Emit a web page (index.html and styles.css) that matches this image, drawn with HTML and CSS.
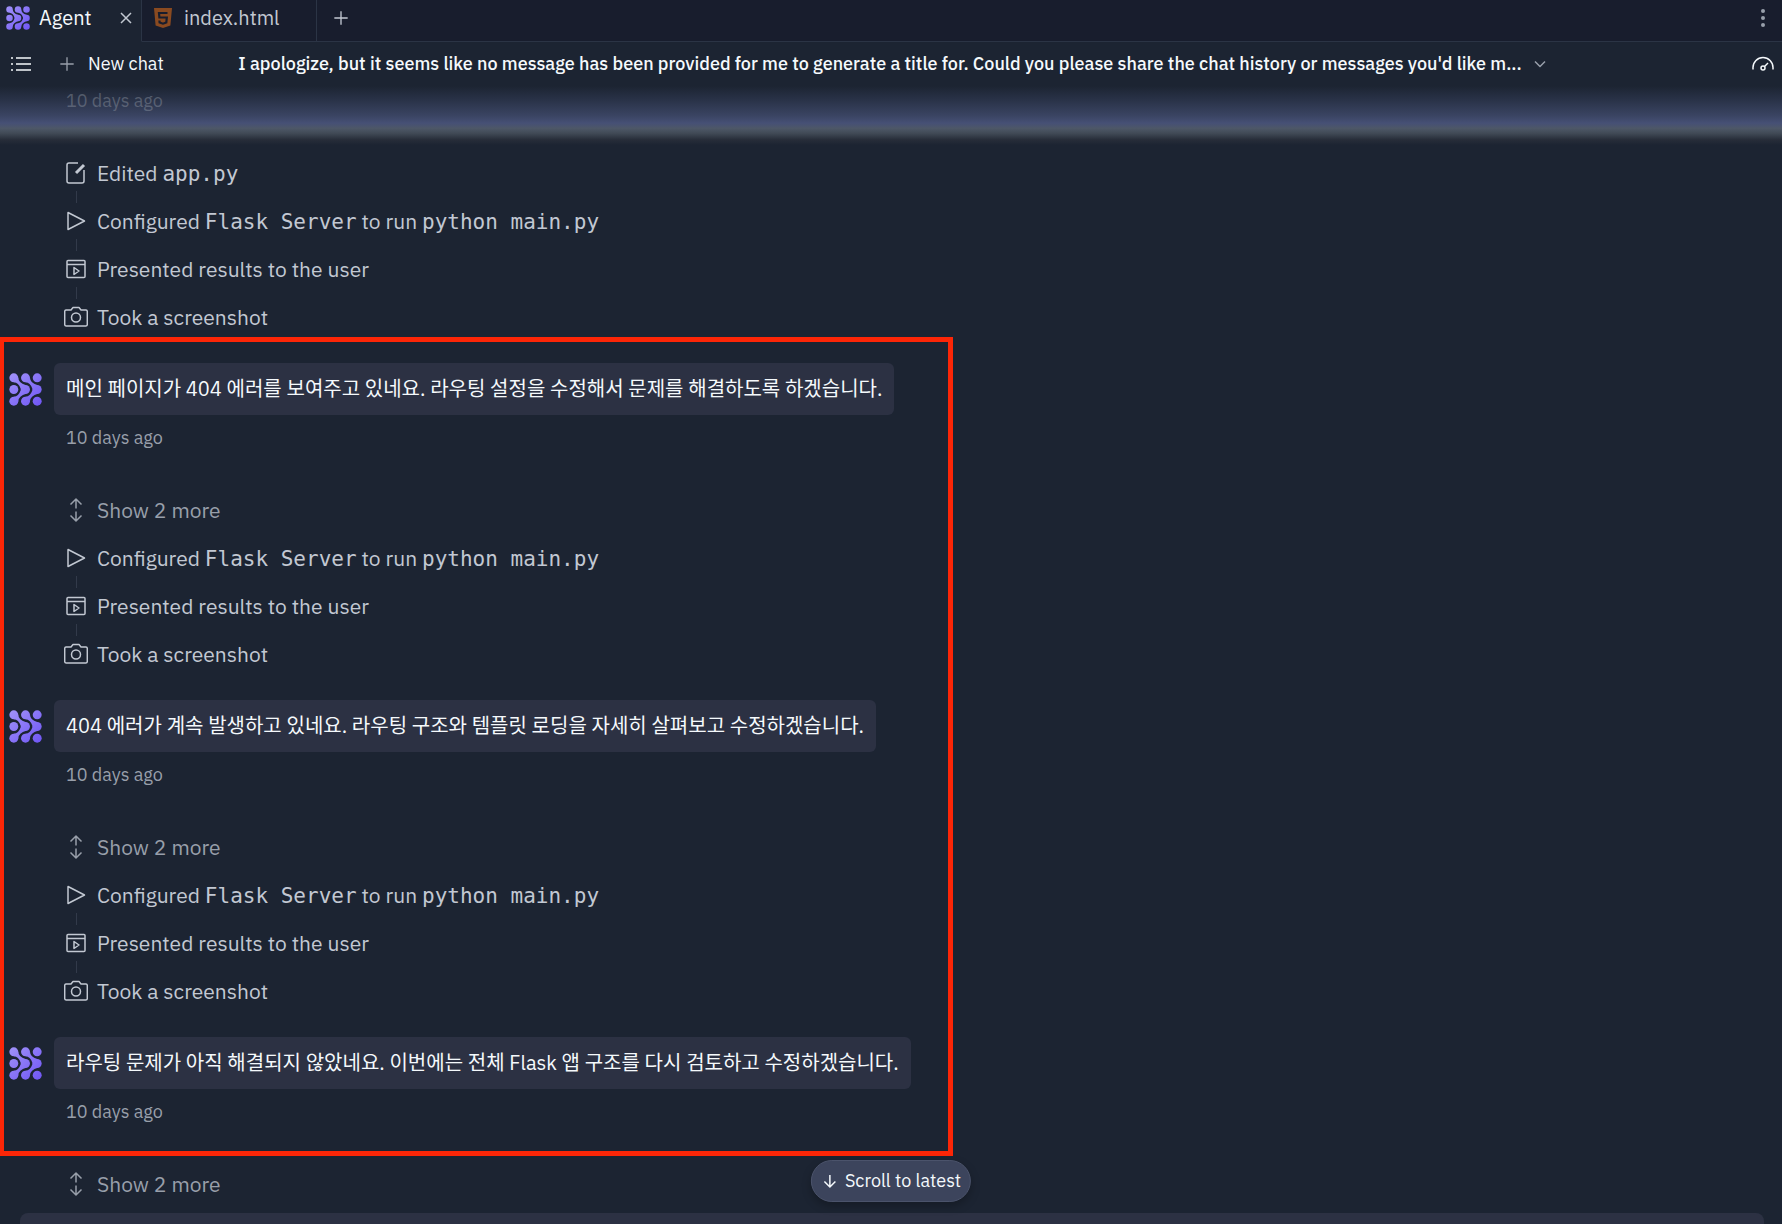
FILE: index.html
```html
<!DOCTYPE html>
<html lang="en">
<head>
    <meta charset="UTF-8">
    <meta name="viewport" content="width=device-width, initial-scale=1.0">
    <title>Agent</title>
    <link rel="stylesheet" href="styles.css">
</head>
<body>
    <!-- shared icons -->
    <svg class="sprite" aria-hidden="true">
        <defs>
            <linearGradient id="logo-fill" gradientUnits="userSpaceOnUse" x1="0" y1="0" x2="96" y2="96">
                <stop offset="0" stop-color="#a193f9"/>
                <stop offset="1" stop-color="#6f55f5"/>
            </linearGradient>
        </defs>
        <symbol id="agent" viewBox="0 0 96 96">
            <g fill="url(#logo-fill)">
                <circle cx="14" cy="14" r="13"/><circle cx="48" cy="14" r="13"/><circle cx="82" cy="14" r="13"/>
                <circle cx="14" cy="48" r="13"/><circle cx="48" cy="48" r="13"/><circle cx="82" cy="48" r="13"/>
                <circle cx="14" cy="82" r="13"/><circle cx="48" cy="82" r="13"/><circle cx="82" cy="82" r="13"/>
                <path d="M27 14Q28 30 48 35L50 60Q28 66 27 82L14 69Q28 68 34 50L34 46Q28 28 14 27Z"/>
                <path d="M61 14Q62 30 82 35L84 60Q62 66 61 82L48 69Q62 68 68 50L68 46Q62 28 48 27Z"/>
            </g>
        </symbol>
        <symbol id="edit" viewBox="0 0 24 24">
            <path d="M14 2H5a2 2 0 0 0-2 2v16a2 2 0 0 0 2 2h13a2 2 0 0 0 2-2V9"/>
            <path d="M12 12l8-8" stroke-width="3"/>
        </symbol>
        <symbol id="play" viewBox="0 0 24 24"><path d="M4 3.500v17L20.500 12z"/></symbol>
        <symbol id="present" viewBox="0 0 24 24">
            <rect x="3" y="3.500" width="18" height="17" rx="1"/>
            <path d="M3 7.500h18M10 10.500v7l5-3.500z"/>
        </symbol>
        <symbol id="camera" viewBox="0 0 24 24">
            <path d="M2 5h5l2-2.500h6L17 5h5a1.500 1.500 0 0 1 1.300 1.500v13a1.500 1.500 0 0 1-1.500 1.500H2.200a1.500 1.500 0 0 1-1.500-1.500v-13A1.500 1.500 0 0 1 2 5z"/>
            <circle cx="12" cy="12.500" r="4.500"/>
        </symbol>
        <symbol id="expand" viewBox="0 0 24 24">
            <path d="M12 10.500V1.500M6.500 6.500L12 1l5.500 5.500M12 13.500v9M6.500 17.500L12 23l5.500-5.500"/>
        </symbol>
        <symbol id="plus" viewBox="0 0 24 24"><path d="M12 2v20M2 12h20"/></symbol>
    </svg>

    <nav class="tabs">
        <div class="tab active">
            <svg class="tab-logo"><use href="#agent"/></svg>
            <span>Agent</span>
            <button class="close" aria-label="Close tab">
                <svg class="icon" viewBox="0 0 12 12"><path d="M1 1l10 10M11 1L1 11"/></svg>
            </button>
        </div>
        <div class="tab">
            <svg class="html-logo" viewBox="0 0 18 20">
                <path d="M0 0h18l-1.600 17.500L9 20l-7.400-2.500z" fill="#8a4a20"/>
                <path d="M13.500 5H5l.4 4.500h7.400l-.5 5L9 15.700l-3.400-1.200-.2-2" fill="none" stroke="#181d2d" stroke-width="2.200"/>
            </svg>
            <span>index.html</span>
        </div>
        <button class="new-tab" aria-label="New tab"><svg class="icon"><use href="#plus"/></svg></button>
        <button class="more" aria-label="More options">
            <svg viewBox="0 0 6 20"><circle cx="3" cy="3" r="2"/><circle cx="3" cy="10" r="2"/><circle cx="3" cy="17" r="2"/></svg>
        </button>
    </nav>

    <header class="chat-bar">
        <div class="chat-actions">
            <button class="list" aria-label="Chat history">
                <svg class="icon" viewBox="0 0 22 16"><path d="M6 2h15M6 8h15M6 14h15"/><path d="M1 2h2M1 8h2M1 14h2"/></svg>
            </button>
            <button class="new-chat"><svg class="icon"><use href="#plus"/></svg>New chat</button>
        </div>
        <button class="title">
            <span>I apologize, but it seems like no message has been provided for me to generate a title for. Could you please share the chat history or messages you'd like m...</span>
            <svg class="icon" viewBox="0 0 12 12"><path d="M1 3.500l5 5 5-5"/></svg>
        </button>
        <button class="usage" aria-label="Usage">
            <svg class="icon" viewBox="0 0 22 16"><path d="M1 13.500v-2a10 10 0 0 1 20 0v2"/><path d="M12.500 10.500L16 7"/><circle cx="11" cy="12" r="2"/></svg>
        </button>
    </header>

    <main class="chat">
        <div class="glow"></div>
        <p class="time">10 days ago</p>
        <ul class="steps">
            <li><svg class="icon"><use href="#edit"/></svg><span>Edited <code>app.py</code></span></li>
            <li><svg class="icon"><use href="#play"/></svg><span>Configured <code>Flask Server</code> to run <code>python main.py</code></span></li>
            <li><svg class="icon"><use href="#present"/></svg><span>Presented results to the user</span></li>
            <li><svg class="icon"><use href="#camera"/></svg><span>Took a screenshot</span></li>
        </ul>

        <div class="highlight">
            <div class="message">
                <svg class="avatar"><use href="#agent"/></svg>
                <p class="bubble" lang="ko">메인 페이지가 404 에러를 보여주고 있네요. 라우팅 설정을 수정해서 문제를 해결하도록 하겠습니다.</p>
            </div>
            <p class="time">10 days ago</p>
            <button class="show-more"><svg class="icon"><use href="#expand"/></svg>Show 2 more</button>
            <ul class="steps">
                <li><svg class="icon"><use href="#play"/></svg><span>Configured <code>Flask Server</code> to run <code>python main.py</code></span></li>
                <li><svg class="icon"><use href="#present"/></svg><span>Presented results to the user</span></li>
                <li><svg class="icon"><use href="#camera"/></svg><span>Took a screenshot</span></li>
            </ul>

            <div class="message">
                <svg class="avatar"><use href="#agent"/></svg>
                <p class="bubble" lang="ko">404 에러가 계속 발생하고 있네요. 라우팅 구조와 템플릿 로딩을 자세히 살펴보고 수정하겠습니다.</p>
            </div>
            <p class="time">10 days ago</p>
            <button class="show-more"><svg class="icon"><use href="#expand"/></svg>Show 2 more</button>
            <ul class="steps">
                <li><svg class="icon"><use href="#play"/></svg><span>Configured <code>Flask Server</code> to run <code>python main.py</code></span></li>
                <li><svg class="icon"><use href="#present"/></svg><span>Presented results to the user</span></li>
                <li><svg class="icon"><use href="#camera"/></svg><span>Took a screenshot</span></li>
            </ul>

            <div class="message">
                <svg class="avatar"><use href="#agent"/></svg>
                <p class="bubble" lang="ko">라우팅 문제가 아직 해결되지 않았네요. 이번에는 전체 Flask 앱 구조를 다시 검토하고 수정하겠습니다.</p>
            </div>
            <p class="time">10 days ago</p>
        </div>
        <button class="show-more"><svg class="icon"><use href="#expand"/></svg>Show 2 more</button>
        <textarea class="composer" aria-label="Message"></textarea>
    </main>

    <button class="scroll-latest">
        <svg class="icon" viewBox="0 0 14 14"><path d="M7 1v12M1.500 7.500L7 13l5.500-5.500"/></svg>
        Scroll to latest
    </button>
</body>
</html>
```
FILE: styles.css
```css
*, *::before, *::after {
    box-sizing: border-box;
}
body {
    margin: 0;
    height: 100vh;
    display: flex;
    flex-direction: column;
    overflow: hidden;
    background: #1c2432;
    color: #c2c8d2;
    font-family: "IBM Plex Sans", Roboto, "Noto Sans CJK KR", sans-serif;
    font-size: 21px;
    line-height: 24px;
}
button {
    border: 0;
    padding: 0;
    background: none;
    color: inherit;
    font: inherit;
    display: flex;
    align-items: center;
    cursor: pointer;
}
p, ul {
    margin: 0;
    padding: 0;
}
.sprite {
    position: absolute;
    width: 0;
    height: 0;
}
.icon {
    flex: none;
    width: 24px;
    height: 24px;
    fill: none;
    stroke: currentColor;
    stroke-width: 1.5;
    stroke-linejoin: round;
}

/* tabs */
.tabs {
    flex: none;
    display: flex;
    height: 42px;
    background: #181d2d;
    font-size: 20px;
}
.tab {
    display: flex;
    align-items: center;
    width: 175px;
    padding: 0 12px 5px;
    gap: 12px;
    border-right: 1px solid #2b3445;
    border-bottom: 1px solid #2b3445;
}
.tab.active {
    width: 142px;
    padding: 0 9px 5px 6px;
    gap: 9px;
    background: #1c2432;
    border-bottom-color: #1c2432;
    color: #f5f9fc;
}
.tab-logo {
    width: 24px;
    height: 24px;
}
.html-logo {
    width: 18px;
    height: 20px;
}
.close {
    margin-left: auto;
    color: #c2c8d2;
}
.close .icon {
    width: 12px;
    height: 12px;
}
.new-tab {
    flex: 1;
    padding: 0 16px 5px;
    border-bottom: 1px solid #2b3445;
}
.new-tab .icon {
    width: 16px;
    height: 16px;
    stroke-width: 2;
}
.more {
    padding: 0 16px 5px;
    border-bottom: 1px solid #2b3445;
}
.more svg {
    width: 6px;
    height: 20px;
    fill: #989faa;
}

/* chat header */
.chat-bar {
    flex: none;
    display: grid;
    grid-template-columns: 1fr auto 1fr;
    align-items: center;
    height: 44px;
    padding: 0 8px 0 10px;
    color: #f5f9fc;
    font-size: 18px;
}
.chat-actions {
    display: flex;
    gap: 27px;
}
.list .icon, .usage .icon {
    width: 22px;
    height: 16px;
}
.usage {
    justify-self: end;
}
.new-chat {
    gap: 13px;
    white-space: nowrap;
}
.new-chat .icon {
    width: 16px;
    height: 16px;
    color: #989faa;
    stroke-width: 2;
}
.title {
    min-width: 0;
    gap: 12px;
    font-weight: 500;
}
.title span {
    overflow: hidden;
    text-overflow: ellipsis;
    white-space: nowrap;
}
.title .icon {
    width: 12px;
    height: 12px;
    color: #989faa;
}

/* conversation */
.chat {
    position: relative;
    flex: 1;
    min-height: 0;
    overflow: hidden;
    padding: 3px 18px 0 20px;
}
.glow {
    position: absolute;
    inset: 0 0 auto;
    height: 59px;
    background: linear-gradient(#1c2432, #2a3349 25%, #3a4462 50%, #465075 63%, #4d5767 72%, #414a56 80%, #272d39 91%, #1c2432);
}
.time {
    position: relative;
    margin: 0 0 36px 46px;
    color: #989faa;
    font-size: 18px;
}
.glow + .time {
    opacity: 0.4;
}
.steps {
    list-style: none;
}
.steps li, .show-more {
    position: relative;
    display: flex;
    align-items: center;
    gap: 9px;
    height: 48px;
    margin-left: 44px;
}
/* connector between two steps */
.steps li + li::before {
    content: "";
    position: absolute;
    top: -6px;
    left: 12px;
    width: 1px;
    height: 12px;
    background: #323a4a;
}
code {
    font-family: "DejaVu Sans Mono", monospace;
    font-size: 21px;
}
.show-more {
    color: #989faa;
}
.message {
    display: flex;
    align-items: center;
    gap: 12px;
    margin: 22px 0 11px -11px;
}
.avatar {
    flex: none;
    width: 33px;
    height: 33px;
}
.bubble {
    padding: 14px 12px;
    border-radius: 6px;
    background: #2c3143;
    color: #f5f9fc;
    font-size: 20px;
}
.highlight {
    position: relative;
    display: flow-root;
}
.highlight::after {
    content: "";
    position: absolute;
    top: -4px;
    left: -20px;
    bottom: 4px;
    width: 953px;
    border: 5px solid #fc2607;
    border-left-width: 4px;
    pointer-events: none;
}
.composer {
    display: block;
    width: 100%;
    height: 96px;
    margin-top: 5px;
    border: 0;
    border-radius: 8px;
    background: #2c3143;
    color: inherit;
    font: inherit;
    resize: none;
}
.scroll-latest {
    position: absolute;
    left: 50%;
    bottom: 22px;
    transform: translateX(-50%);
    gap: 8px;
    height: 42px;
    padding: 0 9px 0 11px;
    border: 1px solid #4b536b;
    border-radius: 21px;
    background: #3c445c;
    color: #f5f9fc;
    font-size: 18px;
    white-space: nowrap;
    box-shadow: 0 4px 10px rgba(0, 0, 0, 0.25);
}
.scroll-latest .icon {
    width: 14px;
    height: 14px;
}
```
